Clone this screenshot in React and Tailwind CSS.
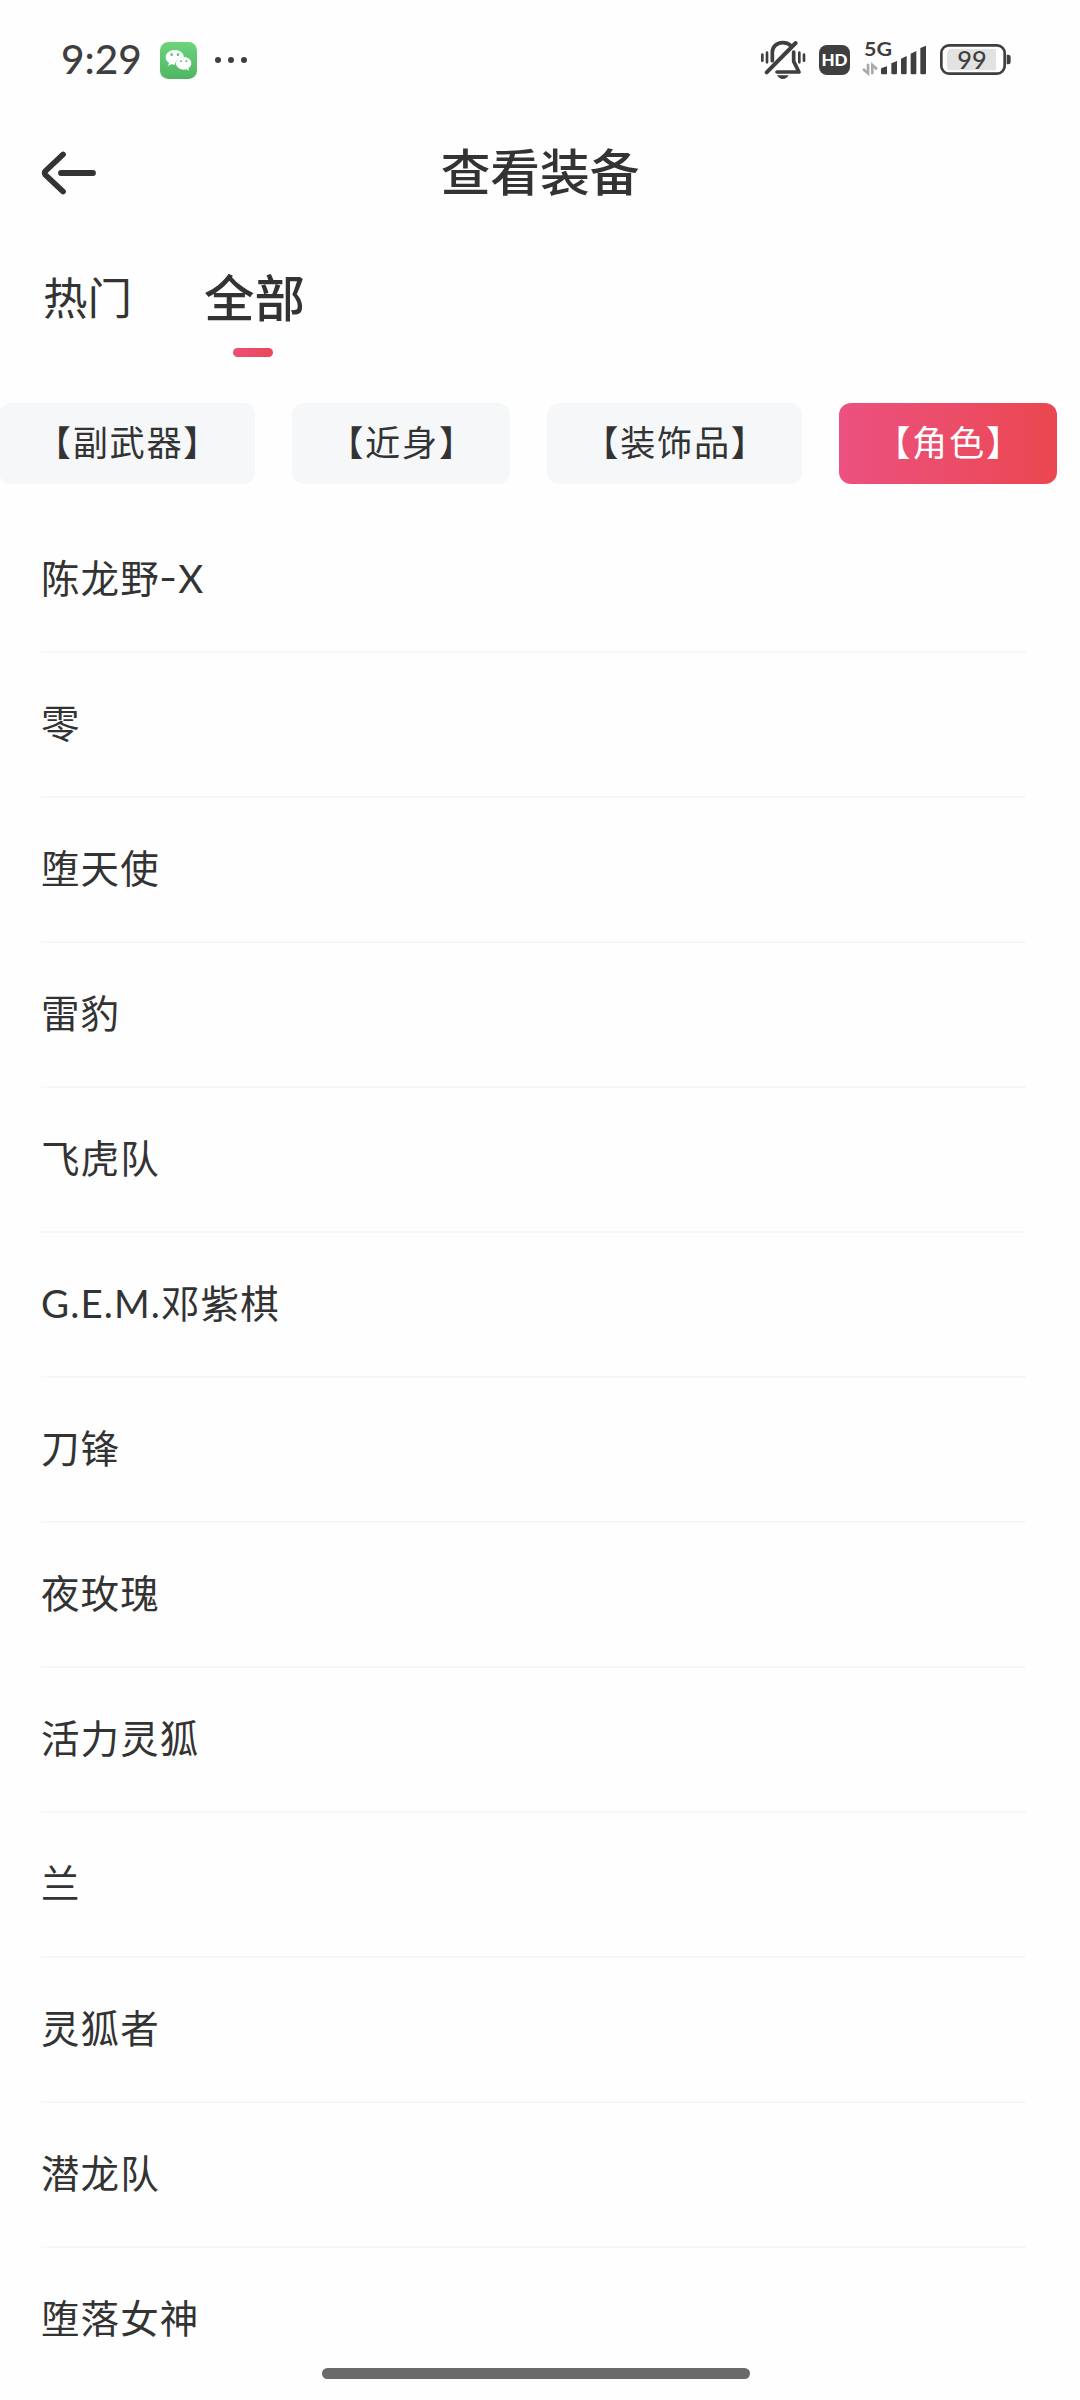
const CJK = "font-['Lato','Noto_Sans_CJK_SC',sans-serif]";

const chips = [
  { label: "【副武器】", width: "w-[256px]" },
  { label: "【近身】", width: "w-[218px]" },
  { label: "【装饰品】", width: "w-[255px]" },
  { label: "【角色】", width: "w-[218px]", active: true },
];

const items = [
  "陈龙野-X",
  "零",
  "堕天使",
  "雷豹",
  "飞虎队",
  "G.E.M.邓紫棋",
  "刀锋",
  "夜玫瑰",
  "活力灵狐",
  "兰",
  "灵狐者",
  "潜龙队",
  "堕落女神",
];

function WeChatIcon() {
  return (
    <svg className="ml-[19px] size-[37px]" viewBox="0 0 111 111">
      <defs>
        <linearGradient id="wechat" x1="0" y1="0" x2="0" y2="1">
          <stop offset="0" stopColor="#6bd47c" />
          <stop offset="1" stopColor="#50b563" />
        </linearGradient>
      </defs>
      <rect width="111" height="111" rx="25" fill="url(#wechat)" />
      <path
        d="M44 24c-15 0-27 10-27 22 0 7 4 13 10 17l-3 9 10-5c4 1 7 1 11 1 1-13 12-23 27-24-2-12-14-20-28-20z"
        fill="#fff"
      />
      <path
        d="M71 45c-13 0-23 8-23 19s10 19 23 19c3 0 5 0 8-1l8 4-2-7c6-4 9-9 9-15 0-11-10-19-23-19z"
        fill="#fff"
      />
      <g fill="#5cc36e">
        <circle cx="35" cy="38" r="4" />
        <circle cx="54" cy="38" r="4" />
        <circle cx="63" cy="58" r="3" />
        <circle cx="79" cy="58" r="3" />
      </g>
    </svg>
  );
}

function MutedBellIcon() {
  return (
    <svg className="h-10 w-[45px]" viewBox="63 60 135 120" fill="none" stroke="#3f3f3f">
      <g strokeWidth="11" strokeLinecap="round" strokeLinejoin="round">
        <path d="M97 122V97c0-18 14-29 32-29 11 0 18 4 24 9" />
        <path d="M161 96v28l16 32h-66" />
        <path d="M80 157L167 69" strokeWidth="12" />
      </g>
      <path d="M111 166h35c-4 7-10 11-17 11s-14-4-18-11z" fill="#3f3f3f" stroke="none" />
      <g strokeWidth="8" strokeLinecap="round">
        <path d="M67 104v18M81 98v29M178 98v29M192 104v18" />
      </g>
    </svg>
  );
}

function SignalIcon() {
  return (
    <svg className="mb-1 ml-3 h-[36px] w-[65px] overflow-visible" viewBox="366 60 195 108" fill="#3f3f3f">
      <text x="372" y="109" fontSize="59" fontWeight="700" fontFamily="Lato" textLength="84" lengthAdjust="spacingAndGlyphs">
        5G
      </text>
      <g fill="none" stroke="#aaa" strokeWidth="8">
        <path d="M384 131v29l-15-13M397 163v-28l14 13" />
      </g>
      <path d="M427 143l14-4v24h-14q-4 0-4-4v-12q0-3 4-4z" />
      <path d="M454 130l17-7v36q0 4-4 4h-9q-4 0-4-4z" />
      <path d="M483 116l17-8v51q0 4-4 4h-9q-4 0-4-4z" />
      <path d="M512 101l17-8v66q0 4-4 4h-9q-4 0-4-4z" />
      <path d="M541 84l17-7v82q0 4-4 4h-9q-4 0-4-4z" />
    </svg>
  );
}

function BatteryIcon() {
  return (
    <svg className="mb-px ml-[13px] h-[31px] w-[71px]" viewBox="600 71 213 93">
      <rect x="604" y="75" width="190" height="85" rx="23" fill="none" stroke="#3f3f3f" strokeWidth="8" />
      <path d="M634 86H768V150H634q-13 0-13-13V99q0-13 13-13z" fill="#e2e2e2" />
      <path d="M800 103h5q7 0 7 7v15q0 7-7 7h-5z" fill="#3f3f3f" />
      <text x="696" y="146" fontSize="76" fontFamily="Lato" fontWeight="500" textAnchor="middle" fill="#3f3f3f">
        99
      </text>
    </svg>
  );
}

function StatusBar() {
  return (
    <div className="flex h-[120px] items-center justify-between pr-[69px] pl-[61px]">
      <div className="flex items-center">
        <span className="mb-[2px] w-[80px] text-[40.5px] leading-none font-medium text-[#3f3f3f]">9:29</span>
        <WeChatIcon />
        <div className="ml-[18px] flex gap-[7px]">
          <i className="size-[6px] rounded-full bg-[#3f3f3f]" />
          <i className="size-[6px] rounded-full bg-[#3f3f3f]" />
          <i className="size-[6px] rounded-full bg-[#3f3f3f]" />
        </div>
      </div>
      <div className="flex items-center">
        <MutedBellIcon />
        <span className="mb-px ml-[13px] flex h-[30px] w-[31px] items-center justify-center rounded-[8px] bg-[#3f3f3f] pb-px text-[17px] leading-none font-black text-white">
          HD
        </span>
        <SignalIcon />
        <BatteryIcon />
      </div>
    </div>
  );
}

function Header() {
  return (
    <header className="grid h-[105px] grid-cols-[1fr_auto_1fr] items-center px-[41px]">
      <svg
        className="h-[44px] w-[56px]"
        viewBox="0 0 56 44"
        fill="none"
        stroke="#333"
        strokeWidth="5.8"
        strokeLinecap="round"
        strokeLinejoin="round"
      >
        <path d="M22 3.500L4.500 20q-1.500 2 0 4L22 40.500M20 22H52" />
      </svg>
      <h1 className="text-[49.7px] leading-none font-medium text-[#333]">查看装备</h1>
    </header>
  );
}

function Tabs() {
  return (
    <nav className="flex h-[178px] pl-[43px] text-[#333]">
      <span className="flex h-[146px] items-center text-[44.5px] leading-none">热门</span>
      <div className="ml-[72px] flex flex-col items-center">
        <span className="flex h-[123px] items-end text-[50.5px] leading-none">
          <span className="flex h-[100px] items-center font-medium">全部</span>
        </span>
        <i className="mr-[4px] h-[9px] w-[40px] rounded-full bg-linear-to-r from-[#ec4f7a] to-[#eb4753]" />
      </div>
    </nav>
  );
}

// Widens the hyphen and lifts it to the middle of the capitals.
function ItemName({ text }) {
  const [head, tail] = text.split("-");
  if (tail === undefined) return <span>{text}</span>;
  return (
    <span>
      {head}
      <span className="mr-[2px] ml-px inline-block origin-center -translate-y-[2px] scale-x-130">-</span>
      {tail}
    </span>
  );
}

export default function App() {
  return (
    <div className={`relative h-[2400px] w-[1080px] overflow-hidden bg-[#fefefe] ${CJK}`} lang="zh-CN">
      <StatusBar />
      <Header />
      <Tabs />
      <div className="-ml-px flex h-[81px] gap-[37px]">
        {chips.map((c) => (
          <div
            key={c.label}
            className={`flex shrink-0 items-center justify-center rounded-[12px] pb-px pl-[2px] text-[35.2px] leading-none tracking-[1.7px] whitespace-nowrap ${c.width} ${
              c.active
                ? "bg-linear-to-r from-[#ec5180] to-[#eb474f] text-white"
                : "bg-[#f5f7f9] text-[#333]"
            }`}
          >
            {c.label}
          </div>
        ))}
      </div>
      <ul className="mt-[24px] pr-[54px] pl-[41px]">
        {items.map((t) => (
          <li
            key={t}
            className="flex h-[145px] items-center border-b-2 border-[#f7f7f7] pb-[3px] text-[38.5px] leading-none font-normal tracking-[1.1px] text-[#333] last:border-transparent"
          >
            <ItemName text={t} />
          </li>
        ))}
      </ul>
      <div className="absolute bottom-[21px] left-[322px] h-[11px] w-[428px] rounded-full bg-[#6a6a6a]" />
    </div>
  );
}
